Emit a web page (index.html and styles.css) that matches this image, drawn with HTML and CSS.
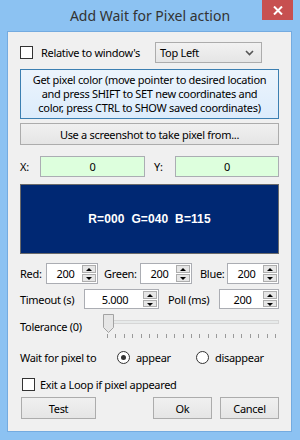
FILE: index.html
```html
<!DOCTYPE html>
<html lang="en">
<head>
  <meta charset="UTF-8" />
  <title>Add Wait for Pixel action</title>
  <link rel="stylesheet" href="styles.css">
</head>
<body>
  <div class="window">
    <div class="titlebar">Add Wait for Pixel action</div>
    <div class="close">
      <svg width="10" height="9" viewBox="0 0 10 9"><path d="M1 0.5 L9 8.5 M9 0.5 L1 8.5" stroke="#fff" stroke-width="2"/></svg>
    </div>
    <div class="client">
      <div class="row-rel">
        <label class="check"><span class="box"></span>Relative to window's</label>
        <div class="select">Top Left
          <svg width="9" height="6" viewBox="0 0 9 6"><path d="M1 1 L4.5 4.5 L8 1" stroke="#555" stroke-width="1.6" fill="none"/></svg>
        </div>
      </div>
      <div class="btn btn-focus btn-tall">
        <p>Get pixel color (move pointer to desired location<br>and press SHIFT to SET new coordinates and<br>color, press CTRL to SHOW saved coordinates)</p>
      </div>
      <div class="btn btn-wide">Use a screenshot to take pixel from...</div>
      <div class="row-xy">
        <span class="lbl-x">X:</span>
        <div class="field">0</div>
        <span class="lbl-y">Y:</span>
        <div class="field">0</div>
      </div>
      <div class="swatch">R=000&nbsp; G=040&nbsp; B=115</div>
      <div class="row-rgb">
        <span class="lbl-red">Red:</span>
        <div class="spin w52"><span class="val">200</span><span class="arrows"><i class="up"></i><i class="down"></i></span></div>
        <span class="lbl-green">Green:</span>
        <div class="spin w52"><span class="val">200</span><span class="arrows"><i class="up"></i><i class="down"></i></span></div>
        <span class="lbl-blue">Blue:</span>
        <div class="spin w52"><span class="val">200</span><span class="arrows"><i class="up"></i><i class="down"></i></span></div>
      </div>
      <div class="row-time">
        <span class="lbl-timeout">Timeout (s)</span>
        <div class="spin w75"><span class="val">5.000</span><span class="arrows"><i class="up"></i><i class="down"></i></span></div>
        <span class="lbl-poll">Poll (ms)</span>
        <div class="spin w60"><span class="val">200</span><span class="arrows"><i class="up"></i><i class="down"></i></span></div>
      </div>
      <div class="row-tol">
        <span class="lbl-tol">Tolerance (0)</span>
        <div class="slider">
          <div class="track"></div>
          <div class="ticks"></div>
          <svg class="thumb" width="11" height="19" viewBox="0 0 11 19"><path d="M0.5 0.5 H10.5 V13.5 L5.5 18.5 L0.5 13.5 Z" fill="#e6e6e6" stroke="#a3a3a3"/></svg>
        </div>
      </div>
      <div class="row-wait">
        <span class="lbl-wait">Wait for pixel to</span>
        <label class="radio on"><span class="dot"></span>appear</label>
        <label class="radio"><span class="dot"></span>disappear</label>
      </div>
      <label class="check exit"><span class="box"></span>Exit a Loop if pixel appeared</label>
      <div class="row-buttons">
        <div class="btn btn-test">Test</div>
        <div class="btn btn-ok">Ok</div>
        <div class="btn btn-cancel">Cancel</div>
      </div>
    </div>
  </div>
</body>
</html>
```

FILE: styles.css
```css
body {
  margin: 0;
  font-family: "Noto Sans", sans-serif;
  font-size: 11px;
  line-height: 15px;
  letter-spacing: -0.3px;
  color: #000;
}
span, label {
  white-space: nowrap;
  flex-shrink: 0;
}
.window {
  position: relative;
  width: 300px;
  height: 440px;
  background: #8cc2f2;
  display: flex;
  flex-direction: column;
}
.titlebar {
  height: 31px;
  flex-shrink: 0;
  display: flex;
  align-items: center;
  justify-content: center;
  font-size: 14px;
  letter-spacing: 0;
  color: #333;
}
.close {
  position: absolute;
  top: 0;
  right: 7px;
  width: 31px;
  height: 20px;
  background: #c75050;
  display: flex;
  align-items: center;
  justify-content: center;
}
.client {
  flex: 1;
  margin: 0 8px 8px 7px;
  background: #f0f0f0;
  border: 1px solid #74abe0;
  padding: 10px 12px 0 12px;
}
.check {
  display: flex;
  align-items: center;
}
.box {
  width: 11px;
  height: 11px;
  border: 1px solid #333;
  background: #fff;
  margin-right: 8px;
}
.row-rel {
  display: flex;
  align-items: center;
  height: 21px;
}
.row-rel .check {
  width: 135px;
}
.select {
  display: flex;
  align-items: center;
  justify-content: space-between;
  padding: 0 7px 0 4px;
  box-sizing: border-box;
  width: 107px;
  height: 21px;
  border: 1px solid #acacac;
  background: linear-gradient(#f2f2f2, #e5e5e5);
}
.btn {
  border: 1px solid #acacac;
  background: linear-gradient(#f0f0f0, #e5e5e5);
  display: flex;
  align-items: center;
  justify-content: center;
  text-align: center;
  box-sizing: border-box;
}
.btn-tall {
  margin-top: 6px;
  height: 50px;
  white-space: nowrap;
}
.btn-tall p {
  margin: 0;
  line-height: 14px;
}
.btn-focus {
  border-color: #3c7fb1;
  background: linear-gradient(#ecf4fc, #dcecfc);
}
.btn-wide {
  margin-top: 4px;
  height: 22px;
}
.row-xy {
  display: flex;
  align-items: center;
  margin-top: 11px;
  height: 21px;
}
.lbl-x {
  width: 20px;
}
.lbl-y {
  width: 21px;
  margin-left: 9px;
}
.field {
  width: 105px;
  height: 21px;
  box-sizing: border-box;
  border: 1px solid #abadb3;
  background: #ddffdd;
  display: flex;
  align-items: center;
  justify-content: center;
}
.row-xy .field:last-child {
  width: 104px;
}
.swatch {
  margin-top: 7px;
  height: 70px;
  box-sizing: border-box;
  border: 1px solid #6a6a6a;
  background: #002873;
  color: #fff;
  font-family: "Liberation Sans", sans-serif;
  font-weight: bold;
  font-size: 12px;
  letter-spacing: 0.1px;
  display: flex;
  align-items: center;
  justify-content: center;
}
.row-rgb {
  display: flex;
  align-items: center;
  margin-top: 9px;
  height: 21px;
}
.lbl-red { width: 26px; }
.lbl-green { width: 36px; margin-left: 6px; }
.lbl-blue { width: 27px; margin-left: 8px; }
.spin {
  display: flex;
  height: 21px;
  box-sizing: border-box;
  border: 1px solid #abadb3;
  background: #fff;
  flex-shrink: 0;
}
.w52 { width: 52px; }
.w75 { width: 75px; }
.w60 { width: 60px; }
.spin .val {
  flex: 1;
  display: flex;
  align-items: center;
  justify-content: center;
  padding-left: 2px;
}
.arrows {
  width: 14px;
  display: flex;
  flex-direction: column;
  gap: 1px;
  padding: 1px 1px 1px 0;
}
.arrows i {
  flex: 1;
  border: 1px solid #adadad;
  background: #e6e6e6;
  position: relative;
}
.arrows i::after {
  content: "";
  position: absolute;
  left: 3px;
  top: 2px;
  border-left: 3px solid transparent;
  border-right: 3px solid transparent;
}
.arrows .up::after {
  border-bottom: 3px solid #000;
}
.arrows .down::after {
  border-top: 3px solid #000;
}
.row-time {
  display: flex;
  align-items: center;
  margin-top: 5px;
  height: 20px;
}
.row-time .spin {
  height: 20px;
}
.lbl-timeout { width: 64px; }
.lbl-poll { width: 51px; margin-left: 9px; }
.row-tol {
  display: flex;
  align-items: center;
  margin-top: 4px;
  height: 27px;
}
.lbl-tol {
  width: 83px;
}
.slider {
  position: relative;
  flex: 1;
  height: 27px;
}
.track {
  margin-top: 7px;
  height: 2px;
  border: 1px solid #d6d6d6;
  background: #e7eaea;
}
.ticks {
  margin: 10px 0 0 4px;
  width: 170px;
  height: 4px;
  background: repeating-linear-gradient(to right, #9a9a9a 0 1px, transparent 1px 8.4px);
}
.thumb {
  position: absolute;
  left: 0;
  top: 1px;
}
.row-wait {
  display: flex;
  align-items: center;
  margin-top: 7px;
  height: 20px;
}
.lbl-wait {
  width: 97px;
}
.radio {
  display: flex;
  align-items: center;
  width: 79px;
}
.dot {
  width: 11px;
  height: 11px;
  border: 1px solid #333;
  border-radius: 50%;
  background: #fff;
  margin-right: 6px;
  position: relative;
}
.radio.on .dot::after {
  content: "";
  position: absolute;
  left: 3px;
  top: 3px;
  width: 5px;
  height: 5px;
  border-radius: 50%;
  background: #333;
}
.exit {
  margin: 9px 0 0 2px;
  height: 16px;
}
.exit .box {
  margin-right: 5px;
}
.row-buttons {
  display: flex;
  margin-top: 5px;
}
.row-buttons .btn {
  height: 22px;
}
.btn-test {
  width: 75px;
  margin-left: 1px;
}
.btn-ok {
  width: 59px;
  margin-left: 57px;
}
.btn-cancel {
  width: 59px;
  margin-left: 8px;
}
```
